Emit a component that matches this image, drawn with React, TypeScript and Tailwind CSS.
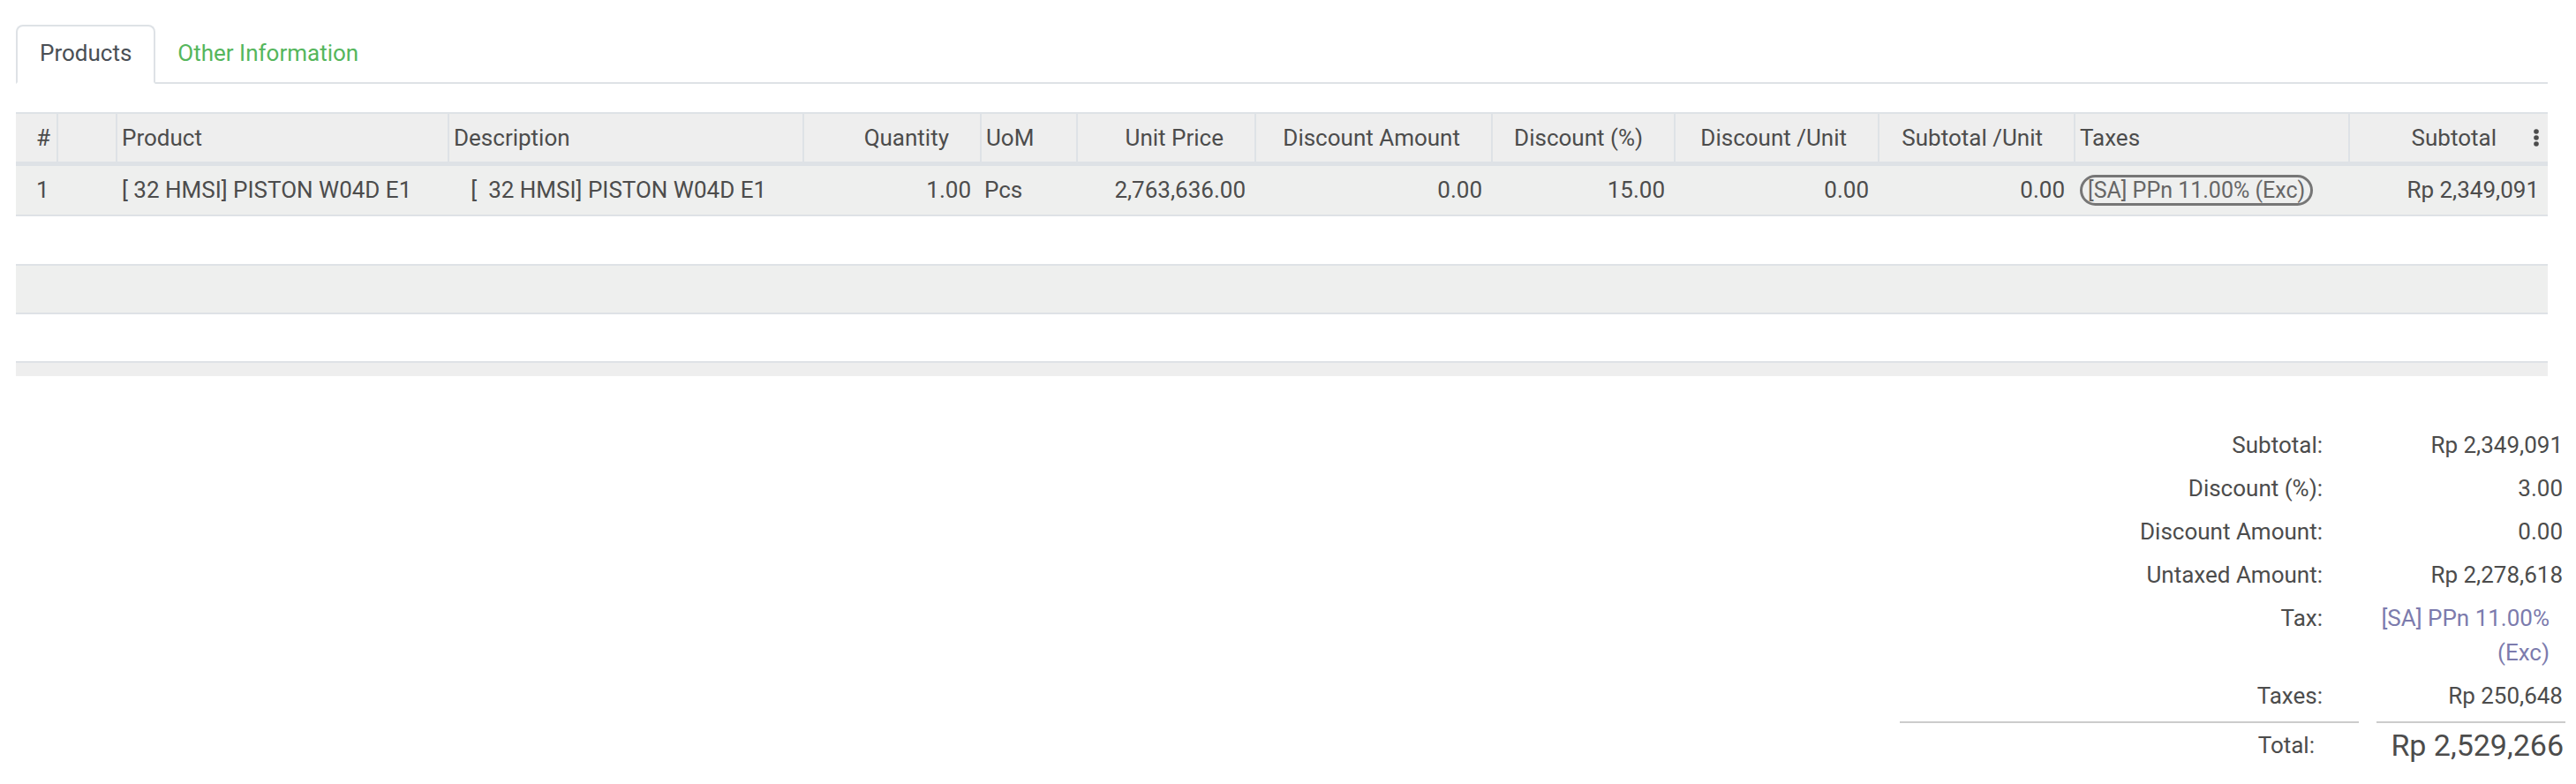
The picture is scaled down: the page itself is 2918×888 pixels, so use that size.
import React from 'react';

// 13 columns, widths measured from the order line list
const GRID =
  'grid grid-cols-[46px_67px_376px_402px_201px_109px_202px_268px_207px_231px_222px_311px_226px]';

type Align = 'left' | 'right';

interface Col {
  label: string;
  align: Align;
}

const columns: Col[] = [
  { label: '#', align: 'left' },
  { label: '', align: 'left' },
  { label: 'Product', align: 'left' },
  { label: 'Description', align: 'left' },
  { label: 'Quantity', align: 'right' },
  { label: 'UoM', align: 'left' },
  { label: 'Unit Price', align: 'right' },
  { label: 'Discount Amount', align: 'right' },
  { label: 'Discount (%)', align: 'right' },
  { label: 'Discount /Unit', align: 'right' },
  { label: 'Subtotal /Unit', align: 'right' },
  { label: 'Taxes', align: 'left' },
  { label: 'Subtotal', align: 'right' },
];

function Kebab() {
  return (
    <svg width="6" height="20" viewBox="0 0 6 20" className="shrink-0">
      <circle cx="3" cy="3" r="2.8" fill="#4c4c4c" />
      <circle cx="3" cy="10" r="2.8" fill="#4c4c4c" />
      <circle cx="3" cy="17" r="2.8" fill="#4c4c4c" />
    </svg>
  );
}

function HeaderRow() {
  return (
    <div className={`${GRID} h-[61px] border-t-2 border-b-[5px] border-[#dee2e6] bg-[#eeeeee]`}>
      {columns.map((col, i) => {
        if (i === 0) {
          return (
            <div key={i} className="flex items-center pl-[23px]">
              {col.label}
            </div>
          );
        }
        if (i === columns.length - 1) {
          return (
            <div key={i} className="flex items-center justify-end border-l-2 border-[#dee2e6] pr-[10px]">
              <span>{col.label}</span>
              <span className="ml-[42px] flex items-center">
                <Kebab />
              </span>
            </div>
          );
        }
        return (
          <div
            key={i}
            className={
              col.align === 'right'
                ? 'flex items-center justify-end border-l-2 border-[#dee2e6] pr-[35px]'
                : 'flex items-center border-l-2 border-[#dee2e6] pl-[5px]'
            }
          >
            {col.label}
          </div>
        );
      })}
    </div>
  );
}

function Cell({ align, children }: { align: Align; children?: React.ReactNode }) {
  return (
    <div className={align === 'right' ? 'flex items-center justify-end pr-[10px]' : 'flex items-center pl-[7px]'}>
      {children}
    </div>
  );
}

function LineRow() {
  return (
    <div className={`${GRID} h-[57px] border-b-2 border-[#dee2e6] bg-[#eeefee]`}>
      <div className="flex items-center pl-[23px]">1</div>
      <div />
      <Cell align="left">[ 32 HMSI] PISTON W04D E1</Cell>
      <Cell align="left">
        <span className="whitespace-pre">{'   [  32 HMSI] PISTON W04D E1'}</span>
      </Cell>
      <Cell align="right">1.00</Cell>
      <div className="flex items-center pl-[5px]">Pcs</div>
      <Cell align="right">2,763,636.00</Cell>
      <Cell align="right">0.00</Cell>
      <Cell align="right">15.00</Cell>
      <Cell align="right">0.00</Cell>
      <Cell align="right">0.00</Cell>
      <Cell align="left">
        <span className="whitespace-nowrap rounded-full border-[3px] border-[#767676] px-[6px] py-[2px] text-[25px] leading-[25px] text-[#666666]">
          [SA] PPn 11.00% (Exc)
        </span>
      </Cell>
      <Cell align="right">Rp 2,349,091</Cell>
    </div>
  );
}

function SummaryRow({ label, children }: { label: string; children: React.ReactNode }) {
  return (
    <>
      <div className="py-[5px] pr-[41px] text-right">{label}</div>
      <div className="py-[5px] pr-[3px] text-right">{children}</div>
    </>
  );
}

export default function App() {
  return (
    <div className="min-h-screen bg-white pt-[28px] font-['Roboto','Liberation_Sans',sans-serif] text-[26px] text-[#4c4c4c]">
      {/* Notebook tabs */}
      <div className="ml-[18px] mr-[32px] flex border-b-2 border-[#dee2e6]">
        <div className="-mb-[2px] rounded-t-[8px] border-2 border-[#dee2e6] border-b-white bg-white px-[25px] pt-[11px] pb-[13px] leading-[39px] text-[#4a4f55]">
          Products
        </div>
        <div className="-mb-[2px] border-2 border-transparent px-[23px] pt-[11px] pb-[13px] leading-[39px] text-[#55b65c]">
          Other Information
        </div>
      </div>

      {/* Order lines */}
      <div className="ml-[18px] mr-[32px] mt-[32px]">
        <HeaderRow />
        <LineRow />
        <div className="h-[56px] border-b-2 border-[#dee2e6] bg-white" />
        <div className="h-[55px] border-b-2 border-[#dee2e6] bg-[#eeefee]" />
        <div className="h-[55px] border-b-2 border-[#dee2e6] bg-white" />
        <div className="h-[15px] bg-[#eeeeee]" />
      </div>

      {/* Totals */}
      <div className="mt-[54px] flex justify-end pr-[12px]">
        <div className="grid w-[754px] grid-cols-[520px_214px] gap-x-[20px] leading-[39px]">
          <SummaryRow label="Subtotal:">Rp 2,349,091</SummaryRow>
          <SummaryRow label="Discount (%):">3.00</SummaryRow>
          <SummaryRow label="Discount Amount:">0.00</SummaryRow>
          <SummaryRow label="Untaxed Amount:">Rp 2,278,618</SummaryRow>
          <div className="py-[5px] pr-[41px] text-right">Tax:</div>
          <div className="py-[5px] pr-[18px] text-right text-[#7c7bad]">[SA] PPn 11.00% (Exc)</div>
          <SummaryRow label="Taxes:">Rp 250,648</SummaryRow>
          <div className="mt-[4px] h-[2px] bg-[#cccccc]" />
          <div className="mt-[4px] h-[2px] bg-[#cccccc]" />
          <div className="pt-[6px] pr-[50px] text-right">Total:</div>
          <div className="pt-[6px] pr-[2px] text-right text-[34px] leading-[39px]">Rp 2,529,266</div>
        </div>
      </div>
    </div>
  );
}
